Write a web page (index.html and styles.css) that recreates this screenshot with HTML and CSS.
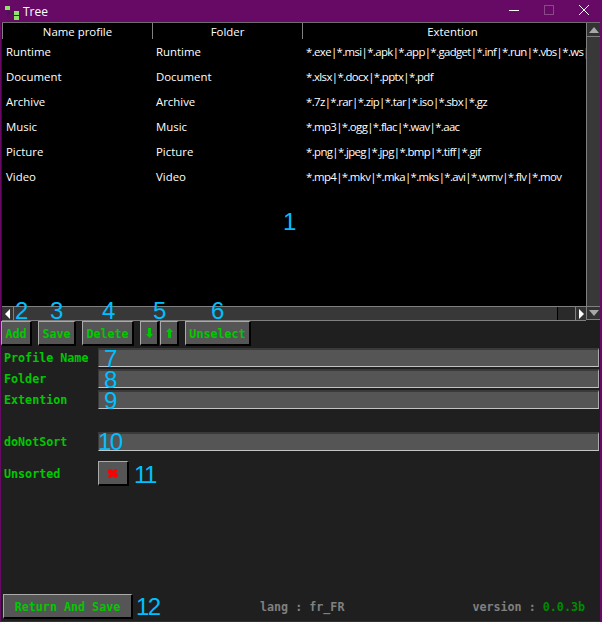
FILE: index.html
```html
<!DOCTYPE html>
<html lang="en">
<head>
<meta charset="utf-8">
<title>Tree</title>
<link rel="stylesheet" href="styles.css">
</head>
<body>
<div class="window">
  <header class="titlebar">
    <svg class="app-icon" width="18" height="18" viewBox="0 0 18 18">
      <rect x="4" y="3" width="5" height="4" fill="#8fe36a"/>
      <rect x="13" y="8" width="5" height="4" fill="#8fe36a"/>
      <rect x="13" y="13" width="5" height="4" fill="#8fe36a"/>
      <path d="M7 7v8M7 10h6" stroke="#3a1a4a" fill="none"/>
    </svg>
    <span class="title">Tree</span>
    <span class="win-controls">
      <svg width="12" height="12" viewBox="0 0 12 12"><path d="M1 6.5h10" stroke="#fff"/></svg>
      <svg width="12" height="12" viewBox="0 0 12 12"><rect x="1.5" y="1.5" width="9" height="9" fill="none" stroke="#8a4a8a"/></svg>
      <svg width="12" height="12" viewBox="0 0 12 12"><path d="M1 1l10 10M11 1L1 11" stroke="#fff"/></svg>
    </span>
  </header>
  <section class="table-wrap">
    <div class="table-main">
      <div class="table-view">
        <div class="thead">
          <div class="th c1">Name profile</div>
          <div class="th c2">Folder</div>
          <div class="th c3">Extention</div>
        </div>
        <div class="tr"><div class="td c1">Runtime</div><div class="td c2">Runtime</div><div class="td c3 ext">*.exe|*.msi|*.apk|*.app|*.gadget|*.inf|*.run|*.vbs|*.ws|*</div></div>
        <div class="tr"><div class="td c1">Document</div><div class="td c2">Document</div><div class="td c3 ext">*.xlsx|*.docx|*.pptx|*.pdf</div></div>
        <div class="tr"><div class="td c1">Archive</div><div class="td c2">Archive</div><div class="td c3 ext">*.7z|*.rar|*.zip|*.tar|*.iso|*.sbx|*.gz</div></div>
        <div class="tr"><div class="td c1">Music</div><div class="td c2">Music</div><div class="td c3 ext">*.mp3|*.ogg|*.flac|*.wav|*.aac</div></div>
        <div class="tr"><div class="td c1">Picture</div><div class="td c2">Picture</div><div class="td c3 ext">*.png|*.jpeg|*.jpg|*.bmp|*.tiff|*.gif</div></div>
        <div class="tr"><div class="td c1">Video</div><div class="td c2">Video</div><div class="td c3 ext">*.mp4|*.mkv|*.mka|*.mks|*.avi|*.wmv|*.flv|*.mov</div></div>
      </div>
      <div class="hscroll">
        <span class="sbtn"><svg width="6" height="10" viewBox="0 0 6 10"><path d="M5 0v10L0 5z" fill="#fff"/></svg></span>
        <span class="hthumb"></span>
        <span class="htrack"></span>
        <span class="sbtn"><svg width="6" height="10" viewBox="0 0 6 10"><path d="M1 0v10l5-5z" fill="#fff"/></svg></span>
      </div>
    </div>
    <div class="vscroll">
      <span class="vbtn"><svg width="10" height="6" viewBox="0 0 10 6"><path d="M0 6h10L5 0z" fill="#a8a8a8"/></svg></span>
      <span class="vthumb"></span>
      <span class="vbtn"><svg width="10" height="6" viewBox="0 0 10 6"><path d="M0 0h10L5 6z" fill="#a8a8a8"/></svg></span>
    </div>
  </section>
  <section class="toolbar">
    <button class="btn b-add">Add</button>
    <button class="btn b-save">Save</button>
    <button class="btn b-del">Delete</button>
    <button class="btn b-arrow"><svg width="7" height="10" viewBox="0 0 7 10"><path d="M2 0h3v6h2l-3.500 4L0 6h2z" fill="#00c800"/></svg></button>
    <button class="btn b-arrow b-up"><svg width="7" height="10" viewBox="0 0 7 10"><path d="M2 10h3V4h2L3.500 0 0 4h2z" fill="#00c800"/></svg></button>
    <button class="btn b-unsel">Unselect</button>
  </section>
  <section class="form">
    <div class="row"><label class="lbl">Profile Name</label><div class="input"></div></div>
    <div class="row"><label class="lbl">Folder</label><div class="input"></div></div>
    <div class="row"><label class="lbl">Extention</label><div class="input"></div></div>
    <div class="row row-sep"><label class="lbl">doNotSort</label><div class="input"></div></div>
    <div class="row row-check"><label class="lbl">Unsorted</label>
      <button class="btn check"><svg width="10" height="9" viewBox="0 0 10 9"><path d="M1 0h2l2 2 2-2h2v2L8 4l2 1v2L8 9H7L5 7 3 9H1L0 7l2-2-2-1V2z" fill="#f00"/></svg></button>
    </div>
  </section>
  <footer class="footer">
    <button class="btn b-return">Return And Save</button>
    <span class="lang">lang : fr_FR</span>
    <span class="version">version : <span class="ver-num">0.0.3b</span></span>
  </footer>
  <span class="num n1">1</span><span class="num n2">2</span><span class="num n3">3</span><span class="num n4">4</span><span class="num n5">5</span><span class="num n6">6</span><span class="num n7">7</span><span class="num n8">8</span><span class="num n9">9</span><span class="num n10 tight">10</span><span class="num n11 tight">11</span><span class="num n12 tight">12</span>
</div>
</body>
</html>
```
FILE: styles.css
```css
* { box-sizing: border-box; }
html, body { margin: 0; padding: 0; }
body { width: 602px; height: 622px; overflow: hidden; background: #1f1f1f; }
.window {
  position: relative; width: 602px; height: 622px;
  display: flex; flex-direction: column;
  background: #1f1f1f;
  border-left: 1px solid #660a66; border-right: 2px solid #660a66; border-bottom: 1px solid #660a66;
}
.titlebar {
  height: 22px; flex: none; margin-left: -1px; margin-right: -2px; background: #660a66;
  display: flex; align-items: center; color: #fff;
  font: 12px "Open Sans", sans-serif;
}
.app-icon { margin-left: 1px; margin-top: 2px; flex: none; }
.title { margin-left: 4px; font-size: 12px; }
.win-controls { margin-left: auto; display: flex; gap: 23px; margin-right: 12px; margin-top: -2px; align-items: center; }
.table-wrap {
  height: 299px; flex: none; margin-left: 1px; display: flex;
  border-top: 1px solid #6e6e6e;
}
.table-main { flex: 1; min-width: 0; display: flex; flex-direction: column; }
.table-view { flex: 1; min-height: 0; overflow: hidden; background: #000; }
.thead { display: flex; height: 16px; }
.th {
  text-align: center; color: #fff; font: 11.4px/17px "Open Sans", sans-serif;
  border-left: 1px solid #808080;
}
.c1 { width: 150px; flex: none; }
.c2 { width: 150px; flex: none; }
.c3 { width: 300px; flex: none; white-space: nowrap; }
.tr { display: flex; height: 25px; padding-top: 4px; }
.td { color: #fff; font: 11.4px/17px "Open Sans", sans-serif; padding-left: 4px; }
.ext { letter-spacing: -0.62px; }
.hscroll {
  height: 15px; flex: none; display: flex; background: #2e2e2e;
  border-top: 1px solid #808080; border-bottom: 1px solid #808080;
}
.sbtn { width: 11px; flex: none; display: flex; align-items: center; justify-content: center; background: #333; }
.sbtn:last-child { border-left: 1px solid #808080; }
.hthumb { width: 545px; background: #383838; border-left: 1px solid #808080; border-right: 1px solid #000; }
.htrack { flex: 1; background: #2a2a2a; }
.vscroll {
  width: 14px; flex: none; display: flex; flex-direction: column;
  border-left: 1px solid #808080; background: #333; margin-bottom: 1px;
}
.vbtn { height: 14px; flex: none; display: flex; align-items: center; justify-content: center; background: #333; border-bottom: 1px solid #808080; }
.vbtn:last-child { border-bottom: 1px solid #808080; border-top: 1px solid #808080; }
.vthumb { flex: 1; background: #383838; }
.toolbar { display: flex; height: 25px; flex: none; background: #1f1f1f; }
.btn {
  padding: 1px 0 0; margin: 0; height: 25px;
  background: #555;
  border-style: solid; border-width: 1px 2px 2px 1px;
  border-color: #aaa #000 #000 #aaa;
  color: #00c800;
  font: bold 11.7px "DejaVu Sans Mono", monospace;
  display: flex; align-items: center; justify-content: center;
}
.b-add { width: 31px; }
.b-save { width: 38px; margin-left: 6px; }
.b-del { width: 52px; margin-left: 6px; }
.b-arrow { width: 19px; margin-left: 6px; padding-top: 0; }
.b-up { margin-left: 1px; }
.b-unsel { width: 66px; margin-left: 6px; }
.form { display: flex; flex-direction: column; padding-top: 2px; flex: 1; }
.row { display: flex; height: 19px; margin-bottom: 2px; align-items: center; }
.row-sep { margin-top: 21px; margin-bottom: 10px; }
.row-check { height: 25px; }
.lbl { width: 97px; padding-left: 3px; flex: none; color: #00c800; font: bold 11.7px "DejaVu Sans Mono", monospace; }
.input {
  width: 501px; height: 19px; background: #555;
  border-style: solid; border-width: 2px 1px 1px 1px;
  border-color: #3a3a3a #aaa #c4c4c4 #3a3a3a;
}
.check { width: 31px; }
.footer { height: 25px; flex: none; margin-bottom: 2px; display: flex; align-items: center; padding-left: 2px; }
.b-return { width: 130px; height: 25px; }
.lang { margin-left: 127px; color: #808080; font: bold 11.7px "DejaVu Sans Mono", monospace; }
.version { margin-left: auto; margin-right: 15px; color: #808080; font: bold 11.7px "DejaVu Sans Mono", monospace; }
.ver-num { color: #008a00; }
.num { position: absolute; color: #00bfff; font: 24px/28px "Liberation Sans", sans-serif; }
.tight { letter-spacing: -1.5px; }
.n1 { left: 282px; top: 208px; }
.n2 { left: 14px; top: 297px; }
.n3 { left: 49px; top: 297px; }
.n4 { left: 101px; top: 297px; }
.n5 { left: 152px; top: 297px; }
.n6 { left: 210px; top: 297px; }
.n7 { left: 103px; top: 345px; }
.n8 { left: 103px; top: 366px; }
.n9 { left: 103px; top: 387px; }
.n10 { left: 97px; top: 428px; }
.n11 { left: 133px; top: 461px; }
.n12 { left: 135px; top: 593px; }
```
